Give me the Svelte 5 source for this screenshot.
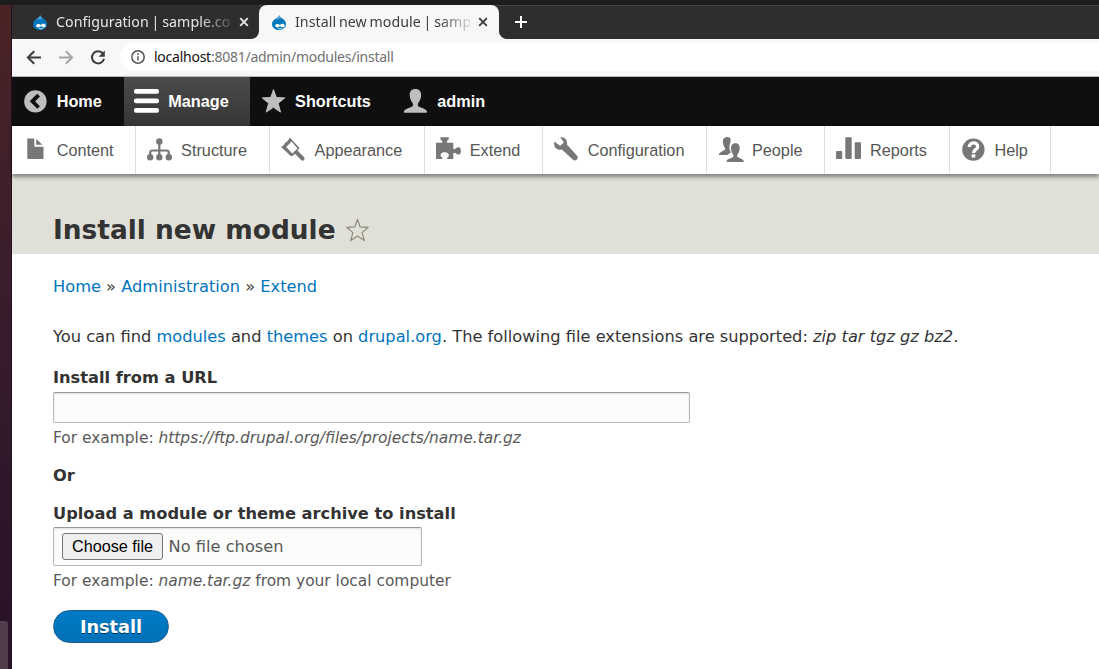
<script>
  const menu = [
    ['content', 'Content'],
    ['structure', 'Structure'],
    ['appearance', 'Appearance'],
    ['extend', 'Extend'],
    ['configuration', 'Configuration'],
    ['people', 'People'],
    ['reports', 'Reports'],
    ['help', 'Help'],
  ];
  const bar = [
    ['home', 'Home'],
    ['manage', 'Manage'],
    ['shortcuts', 'Shortcuts'],
    ['user', 'admin'],
  ];
  const tabs = [
    { title: 'Configuration | sample.co', active: false },
    { title: 'Install new module | samp', active: true },
  ];
</script>

{#snippet icon(name)}
  <svg class="icon" viewBox="0 0 25 25" aria-hidden="true">
    {#if name === 'home'}
      <circle cx="12.4" cy="12.4" r="11.2" />
      <path d="M15.6 6.2 9.4 12.3l6.2 6.2" fill="none" stroke="#0f0f0f" stroke-width="3.8" />
    {:else if name === 'manage'}
      <rect x="0" y="0" width="25" height="4.7" rx="2" />
      <rect x="0" y="9.6" width="25" height="4.7" rx="2" />
      <rect x="0" y="19" width="25" height="4.7" rx="2" />
    {:else if name === 'shortcuts'}
      <path d="M12.5.6l2.8 7.9 8.5.4-6.6 5.4 2.3 8.8-7.1-4.8-7.2 4.8 2.5-8.8L1.2 8.900l8.500-.4z" stroke="#bebebe" stroke-width="1" stroke-linejoin="round" />
    {:else if name === 'user'}
      <path transform="translate(-.9)" d="M12.3 0C8.3 0 6.4 2.700 6.600 6.300c.1 3.300 1.500 6.200 3 7.900.7 1.100.3 3-1 3.600C5.800 19 1.600 20 .8 22.600c-.2.8 0 1.100.5 1.100h22c.6 0 .8-.4.6-1.100-.8-2.600-5-3.600-7.900-4.800-1.300-.6-1.700-2.500-1-3.600 1.500-1.700 2.900-4.600 3-7.900C18.200 2.700 16.300 0 12.300 0z" />
    {:else if name === 'content'}
      <path d="M4.500.5h6.800v8.200h9.200v11.500a.8.8 0 0 1-.8.8H5.100a.8.8 0 0 1-.8-.8V.9zM13.200 1v5.800h6.200z" />
    {:else if name === 'structure'}
      <path d="M12.300 3.500V19M3.200 19v-4.500a2 2 0 0 1 2-2h14.500a2 2 0 0 1 2 2V19" fill="none" stroke="#777" stroke-width="2.200" />
      <circle cx="12.300" cy="3.500" r="3.200" /><circle cx="3.200" cy="19.300" r="3.200" />
      <circle cx="12.300" cy="19.300" r="3.200" /><circle cx="21.800" cy="19.300" r="3.200" />
    {:else if name === 'appearance'}
      <path fill-rule="evenodd" d="M0 8.900 2.600 7.300 3.900 4.900 6.700 2.900 8.900-.6 11.300 2.200 18.500 10 16.500 12.500 23 19a2.100 2.100 0 0 1-3 3L14 15.800 11.200 18.300 9.800 17.900zM10.600 3.600 5.200 8.900 11.300 15.600 16.500 10.400z" />
    {:else if name === 'extend'}
      <path d="M0 4.800h5.700c.8 0 .9-1.500 0-2.200-.8-.5-1.300-1-1.300-2V-.7h8.400V.6c0 1-.5 1.500-1.300 2-.9.700-.8 2.200 0 2.200h5.800v5.500c0 1.100 1.700 1.100 2.400.2.900-1.200 2.300-1.200 3.300-1.200 1 0 1.900 1.600 1.900 3.800s-.9 3.600-1.900 3.600c-1 0-2.300-.2-3.300-1.400-.7-.7-2.400-.5-2.400.5V21h-5.600c-.8 0-.9-1.200.1-1.800 2.600-2.200.3-5-3.200-5s-5.500 2.800-2.800 5c.8.600.7 1.800 0 1.800H0z" />
    {:else if name === 'configuration'}
      <path d="M1.100 3.900 6.200 7.900 9.900 4.200 6.300-.6C10-1.600 14 1.700 12.900 6.600l10 10.900c2.600 2.900-1.400 6.700-4.200 4.100L7.900 11.500C4.100 12.900-.6 9.900.2 4.500c.1-.7.500-.9.900-.6z" />
    {:else if name === 'people'}
      <path d="M9.200-1C5.900-1 4.600 1.500 4.900 4.300c.2 2.400 1.100 4.500 2 5.700 1 1.900-1 2.500-3 3.400-1.800.8-2.900 1.800-3 3.500h8.600c1-1 2.400-1.700 3.500-2.300-1.500-2.400-2.400-6.200-.9-9.100C13.200 2 13.200-1 9.200-1z" />
      <path d="M17.400 5.300c-3.500 0-4.600 2.600-4.400 5.500.2 2.600 1.200 4.500 2.100 5.700 1.200 2.400-.7 3-3 3.900-2.300.8-3.500 1.500-3.500 3.600h17.300c0-2.100-1.500-3-3.600-3.800-2.300-.9-3.900-1.300-2.800-3.700.9-1.200 2-3.100 2.200-5.700.2-2.900-.8-5.500-4.300-5.500z" />
    {:else if name === 'reports'}
      <rect x="0" y="13" width="6.200" height="8" rx="1" />
      <rect x="9.300" y="-.8" width="6.400" height="21.800" rx="1" />
      <rect x="18.700" y="4.300" width="6.300" height="16.700" rx="1" />
    {:else if name === 'help'}
      <circle cx="12.400" cy="11.600" r="11.200" />
      <path d="M8.200 9c.2-5.500 8.400-5.400 8.500-.5.100 3.400-4.200 3-4.200 6.500" fill="none" stroke="#fff" stroke-width="3.300" />
      <rect x="10.700" y="16.300" width="3.600" height="3.200" fill="#fff" />
    {/if}
  </svg>
{/snippet}

<div class="desktop">
  <aside class="dock"><span></span></aside>
  <div class="window">
    <div class="tabs">
      {#each tabs as tab}
        <div class="tab" class:active={tab.active}>
          <svg class="drop" viewBox="0 0 14 15">
            <path d="M7.300 0C7.700 2 9.200 2.700 10.700 3.800 12.600 5.100 14 7 14 9c0 3.500-3 6-7 6s-7-2.500-7-6c0-2.300 1.500-4 3.300-5.100C5.200 2.800 6.800 2 7.300 0z" fill="#0678be" />
            <path d="M3.300 4C5.200 2.800 6.800 2 7.300 0c.3 1.600 1 2.300 2.100 3C8 4.700 4.500 4.700 3.300 4z" fill="#8fc9e8" opacity=".5" />
            <path d="M3.200 11c0-2.300 3-2.500 4.700-1 1.500-1.300 3.900-1.900 4.600-.1.600 1.800-.6 2.700-1.700 2.500-1.100-.2-1.600-1.200-2.800-1.200-1.200 0-1.500 1.400-3 1.300-1-.1-1.800-.7-1.800-1.500z" fill="#fff" />
            <path d="M6 13.300c1.300.7 2.900.7 3.900-.1" fill="none" stroke="#fff" stroke-width=".8" />
          </svg>
          <span class="title">{tab.title}</span>
          <svg class="close" viewBox="0 0 10 10"><path d="m1.200 1.200 7.600 7.600m0-7.600L1.200 8.800" /></svg>
        </div>
      {/each}
      <svg class="plus" viewBox="0 0 12 12"><path d="M6 0v12M0 6h12" /></svg>
    </div>
    <div class="address">
      <svg class="nav" viewBox="0 0 16 16"><path d="M15 7.500H2M8.200 1.200 1.900 7.500l6.300 6.300" /></svg>
      <svg class="nav off" viewBox="0 0 16 16"><path d="M1 7.500h13M7.800 1.200 14.100 7.500l-6.300 6.300" /></svg>
      <svg class="nav" viewBox="0 0 16 16"><path d="M13 3.700A6.100 6.100 0 1 0 14 8.800" /><path d="M14.800.5v6.200H8.600z" class="head" /></svg>
      <div class="url">
        <svg viewBox="0 0 14 14"><circle cx="7" cy="7" r="6.200" /><path d="M7 6.200v4.300M7 3.300v1.600" /></svg>
        <span><b>localhost</b>:8081/admin/modules/install</span>
      </div>
    </div>
    <nav class="bar">
      {#each bar as [name, label]}
        <a href="#{name}" class:open={name === 'manage'}>{@render icon(name)}{label}</a>
      {/each}
    </nav>
    <nav class="tray">
      {#each menu as [name, label]}
        <a href="#{name}">{@render icon(name)}{label}</a>
      {/each}
    </nav>
    <header>
      <h1>Install new module</h1>
      <svg class="fav" viewBox="0 0 24 24"><path d="M12 1.300l2.600 7.600 8.200.4-6.200 5.300 2.200 8-6.800-4.500-6.800 4.500 2.200-8L1.200 9.300l8.200-.4z" /></svg>
    </header>
    <main>
      <p class="crumbs"><a href="#home">Home</a> » <a href="#admin">Administration</a> » <a href="#extend">Extend</a></p>
      <p class="intro">You can find <a href="#modules">modules</a> and <a href="#themes">themes</a> on <a href="#drupal">drupal.org</a>. The following file extensions are supported: <em>zip tar tgz gz bz2</em>.</p>
      <label for="url">Install from a URL</label>
      <input id="url" type="text" />
      <p class="hint">For example: <em>https://ftp.drupal.org/files/projects/name.tar.gz</em></p>
      <strong class="or">Or</strong>
      <strong class="upload">Upload a module or theme archive to install</strong>
      <div class="file"><button type="button">Choose file</button><span>No file chosen</span></div>
      <p class="hint">For example: <em>name.tar.gz</em> from your local computer</p>
      <button type="submit" class="submit">Install</button>
    </main>
  </div>
</div>

<style>
  :global(body) { background: #fff; overflow: hidden; }
  * { box-sizing: border-box; }
  .desktop { width: 1099px; height: 669px; display: flex; padding-top: 5px; background: #1d1d1d; overflow: hidden; }
  .dock { width: 12px; flex: none; display: flex; align-items: flex-end; background: linear-gradient(#4a2324, #40202a 25%, #371c2d 50%, #2c152a 80%, #2a1328); border-right: 1px solid #241020; }
  .dock span { width: 8px; height: 48px; background: #503e4f; border-radius: 0 3px 0 0; }
  .window { flex: 1; min-width: 0; background: #fff; }

  .tabs { height: 34px; display: flex; align-items: flex-start; background: radial-gradient(circle at 100% 0, #302d2e 7.500px, #f7f7f7 8.500px) 487px 26px / 8px 8px no-repeat, linear-gradient(#f7f7f7, #f7f7f7) 239px 26px / 16px 8px no-repeat, #302d2e; box-shadow: inset 0 1px #444; font: 14.200px/34px "Noto Sans", sans-serif; letter-spacing: .06px; word-spacing: -1px; color: #e6e6e6; }
  .tab { height: 34px; display: flex; align-items: center; padding-left: 21px; width: 247px; background: #302d2e; border-radius: 0 0 8px 0; }
  .tab.active { width: 240px; padding-left: 13px; background: #f7f7f7; color: #3c3c3c; border-radius: 8px 8px 0 0; }
  .drop { width: 14px; height: 15px; margin-right: 9px; }
  .title { width: 175px; overflow: hidden; white-space: nowrap; -webkit-mask-image: linear-gradient(90deg, #000 82%, transparent 103%); mask-image: linear-gradient(90deg, #000 82%, transparent 103%); }
  .close { width: 10px; height: 10px; margin-left: 8px; fill: none; stroke: currentColor; stroke-width: 1.900; }
  .plus { width: 12px; height: 12px; margin: 11px 0 0 16px; stroke: #fff; stroke-width: 2; }
  .address { height: 38px; display: flex; align-items: center; padding-left: 14px; background: #f7f7f7; border-bottom: 1px solid #b8bab8; }
  .nav { width: 16px; height: 16px; margin-right: 16px; fill: none; stroke: #3c3c3c; stroke-width: 2; }
  .nav.off { stroke: #a6a6a6; }
  .nav .head { fill: #3c3c3c; stroke: none; }
  .url { flex: 1; height: 28px; margin-left: -2px; margin-right: -20px; margin-bottom: 1px; padding-left: 11px; display: flex; align-items: center; background: #fff; border-radius: 14px; font: 14px/28px "Noto Sans", sans-serif; letter-spacing: -.25px; color: #707070; }
  .url b { color: #111; font-weight: 400; }
  .url svg { width: 14px; height: 14px; margin-right: 9px; fill: none; stroke: #555; stroke-width: 1.500; }

  .bar, .tray { display: flex; font: 16.250px/49px "Liberation Sans", Arial, sans-serif; }
  .bar { height: 49px; background: #0f0f0f; font-weight: 700; }
  .bar a, .tray a { display: flex; padding: 0 1.333em 0 11px; text-decoration: none; }
  .bar a { color: #fff; fill: #bebebe; }
  .bar .open { fill: #fff; background: linear-gradient(#4c4c4c, #353535); }
  .icon { width: 25px; height: 25px; margin: 12px 8.700px 0 0; overflow: visible; }
  .open .icon { margin-left: -1px; margin-right: 9.700px; }
  .tray { height: 48px; background: #fff; position: relative; box-shadow: 0 3px 4px rgba(0,0,0,.42); }
  .tray a { color: #565656; fill: #777; border-right: 1px solid #ddd; padding-right: 21.820px; }

  header { height: 80px; padding: 20px 0 0 41px; display: flex; align-items: center; background: #e0e0d8; color: #333; }
  h1 { margin: 11px 0 0; font: 700 26.400px/32px "DejaVu Sans", sans-serif; }
  .fav { width: 25px; height: 24px; margin: 11px 0 0 9px; fill: none; stroke: #8b8b78; stroke-width: 1.200; stroke-linejoin: round; }
  main { padding: 22px 0 0 41px; font: 16.240px/22px "DejaVu Sans", sans-serif; color: #333; display: flex; flex-direction: column; align-items: flex-start; white-space: nowrap; }
  main a { color: #0074bd; text-decoration: none; }
  p { margin: 0; }
  .crumbs { margin-bottom: 28px; }
  .intro { margin-bottom: 19px; }
  label, strong { font-weight: 700; }
  #url { width: 637px; height: 31px; margin-top: 3px; }
  #url, .file { border: 1px solid #b8b8b8; border-top-color: #999; border-radius: 2px; background: #fcfcfa; box-shadow: inset 0 1px 2px rgba(0,0,0,.12); }
  .hint { margin-top: 4px; font-size: 15.430px; color: #595959; }
  .or { margin: 16px 0; }
  .file { width: 369px; height: 39px; margin-top: 2px; padding-left: 8px; display: flex; align-items: center; color: #595959; font-size: 16.250px; }
  .file button { width: 101px; height: 27px; margin-right: 5.500px; padding: 0 0 1px; border: 1px solid #767676; border-radius: 3px; background: #efefef; color: #000; font: 16.200px/23px "Liberation Sans", Arial, sans-serif; }
  .submit { width: 116px; height: 33px; margin-top: 18px; padding: 0; border: 1px solid #1e5c90; border-radius: 17px; background: linear-gradient(#007bc6, #0071b8); color: #fff; font: 700 17.700px/30px "DejaVu Sans", sans-serif; text-shadow: 0 1px rgba(0,0,0,.5); }
</style>
